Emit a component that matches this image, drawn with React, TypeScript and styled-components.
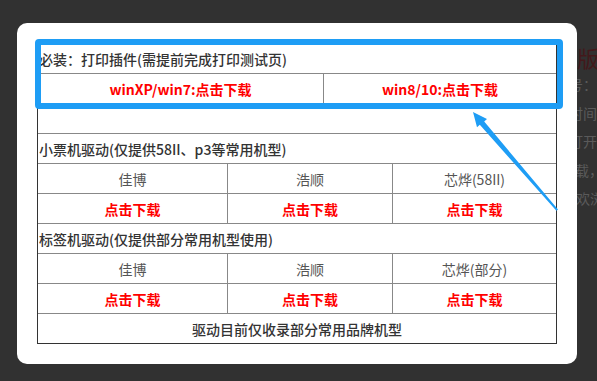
import React from 'react';
import styled, { createGlobalStyle } from 'styled-components';

const GlobalStyle = createGlobalStyle`
    html, body {
        margin: 0;
        padding: 0;
    }
    body {
        background: #313131;
        font-family: "Noto Sans CJK SC", "Noto Sans", sans-serif;
    }
`;

type Cell = { text: string; kind: 'title' | 'name' | 'link' | 'note' };
type Row = { cols: string; cells: Cell[] };

const ROWS: Row[] = [
    { cols: '1fr', cells: [{ text: '必装：打印插件(需提前完成打印测试页)', kind: 'title' }] },
    {
        cols: '286px 1fr',
        cells: [
            { text: 'winXP/win7:点击下载', kind: 'link' },
            { text: 'win8/10:点击下载', kind: 'link' },
        ],
    },
    { cols: '1fr', cells: [{ text: '', kind: 'note' }] },
    { cols: '1fr', cells: [{ text: '小票机驱动(仅提供58II、p3等常用机型)', kind: 'title' }] },
    {
        cols: '190px 165px 1fr',
        cells: [
            { text: '佳博', kind: 'name' },
            { text: '浩顺', kind: 'name' },
            { text: '芯烨(58II)', kind: 'name' },
        ],
    },
    {
        cols: '190px 165px 1fr',
        cells: [
            { text: '点击下载', kind: 'link' },
            { text: '点击下载', kind: 'link' },
            { text: '点击下载', kind: 'link' },
        ],
    },
    { cols: '1fr', cells: [{ text: '标签机驱动(仅提供部分常用机型使用)', kind: 'title' }] },
    {
        cols: '190px 165px 1fr',
        cells: [
            { text: '佳博', kind: 'name' },
            { text: '浩顺', kind: 'name' },
            { text: '芯烨(部分)', kind: 'name' },
        ],
    },
    {
        cols: '190px 165px 1fr',
        cells: [
            { text: '点击下载', kind: 'link' },
            { text: '点击下载', kind: 'link' },
            { text: '点击下载', kind: 'link' },
        ],
    },
    { cols: '1fr', cells: [{ text: '驱动目前仅收录部分常用品牌机型', kind: 'note' }] },
];

// page text that sits behind the dialog mask
const BEHIND = [
    { text: '该软件当前最新的版本号：v3.0.1', shift: 0 },
    { text: '软件正式发布后的更新时间：2020年', shift: 0 },
    { text: '下载完成后请直接双击打开安装', shift: 0 },
    { text: '如安装失败后请重新下载，', shift: 6 },
    { text: '推荐大家使用自己最喜欢浏览器', shift: 7 },
];

const App: React.FC = () => {
    return (
        <Page>
            <GlobalStyle />
            <BehindPage>
                <BehindTitle>打印客户端新版本</BehindTitle>
                {BEHIND.map((line, i) => (
                    <BehindLine key={i} $shift={line.shift}>{line.text}</BehindLine>
                ))}
            </BehindPage>
            <Mask>
                <Modal>
                    <TableWrap>
                        {ROWS.map((row, i) => (
                            <TableRow key={i} $cols={row.cols}>
                                {row.cells.map((cell, j) => (
                                    <TableCell key={j} $kind={cell.kind}>{cell.text}</TableCell>
                                ))}
                            </TableRow>
                        ))}
                    </TableWrap>
                    <Highlight />
                    <Arrow viewBox="0 0 560 340" width="560" height="340">
                        <polygon
                            fill="#1e9df5"
                            points="456,89 470,96 467.2,98.6 541,186.4 539.4,187.8 462.8,101.8 460,104.2"
                        />
                    </Arrow>
                </Modal>
            </Mask>
        </Page>
    );
};

export default App;

const Page = styled.div`
    position: relative;
    width: 597px;
    height: 381px;
    overflow: hidden;
    background: #313131;
`;

const BehindPage = styled.div`
    display: flex;
    flex-direction: column;
    padding: 44px 0 0 429px;
    white-space: nowrap;
`;

const BehindTitle = styled.div`
    margin-left: 16px;
    font-size: 22px;
    line-height: 26px;
    color: #43191b;
`;

const BehindLine = styled.div<{ $shift: number }>`
    margin-left: ${({ $shift }) => $shift}px;
    font-size: 14px;
    line-height: 28.5px;
    color: #5a5a5a;
`;

const Mask = styled.div`
    position: absolute;
    inset: 0;
    display: flex;
    align-items: flex-start;
    padding: 23px 0 0 17px;
`;

const Modal = styled.div`
    position: relative;
    width: 560px;
    box-sizing: border-box;
    padding: 20px;
    background: #fff;
    border-radius: 10px;
`;

const TableWrap = styled.div`
    border: 1px solid #333;
    font-size: 14px;
`;

const TableRow = styled.div<{ $cols: string }>`
    display: grid;
    grid-template-columns: ${({ $cols }) => $cols};
    height: 29px;
    border-bottom: 1px solid #888;
    &:last-child {
        border-bottom: none;
    }
`;

const TableCell = styled.div<{ $kind: Cell['kind'] }>`
    display: flex;
    align-items: center;
    justify-content: ${({ $kind }) => ($kind === 'title' ? 'flex-start' : 'center')};
    padding: 0 1px;
    border-right: 1px solid #888;
    white-space: nowrap;
    color: ${({ $kind }) => ($kind === 'link' ? '#ff0000' : $kind === 'name' ? '#555' : '#333')};
    font-weight: ${({ $kind }) => ($kind === 'link' ? 700 : $kind === 'name' ? 400 : 500)};
    &:last-child {
        border-right: none;
    }
`;

const Highlight = styled.div`
    position: absolute;
    left: 18px;
    top: 16px;
    width: 528px;
    height: 70px;
    box-sizing: border-box;
    border: 6px solid #1e9df5;
    border-radius: 4px;
    pointer-events: none;
`;

const Arrow = styled.svg`
    position: absolute;
    left: 0;
    top: 0;
    overflow: visible;
    pointer-events: none;
`;
